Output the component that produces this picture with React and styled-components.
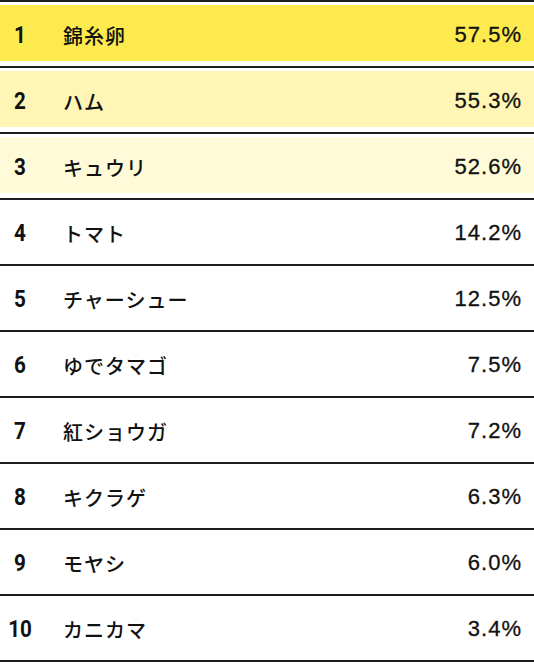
import React from "react"
import styled, { createGlobalStyle } from "styled-components"

const GlobalStyle = createGlobalStyle`
  html, body {
    margin: 0;
    padding: 0;
    background: #fff;
  }
  body {
    font-family: "Noto Sans CJK JP", "Liberation Sans", sans-serif;
    color: #111;
  }
`

const List = styled.ol`
  list-style: none;
  margin: 0;
  padding: 0;
  width: 534px;
  border-bottom: 2px solid #1e1e1e;
`

const Row = styled.li`
  border-top: 2px solid #1e1e1e;
  padding: 3px 0 5px 0;
`

const Cell = styled.div`
  display: grid;
  grid-template-columns: 40px 1fr auto;
  align-items: center;
  height: 56px;
  padding-right: 12px;
  background: ${(p) => p.$bg};
`

const Rank = styled.span`
  display: inline-block;
  font-family: Roboto, "Liberation Sans", sans-serif;
  font-weight: 700;
  font-size: 24px;
  text-align: center;
  padding-top: 3px;
  transform: scaleX(0.86);
`

const Name = styled.span`
  font-family: "Noto Sans CJK JP", sans-serif;
  font-weight: 500;
  font-size: 20px;
  padding-left: 23px;
  padding-top: 4px;
  letter-spacing: 1px;
`

const Percent = styled.span`
  font-family: "Liberation Sans", Arial, sans-serif;
  font-size: 22px;
  letter-spacing: 1px;
  padding-top: 3px;
  -webkit-text-stroke: 0.3px #111;
`

const items = [
  ["錦糸卵", "57.5%"],
  ["ハム", "55.3%"],
  ["キュウリ", "52.6%"],
  ["トマト", "14.2%"],
  ["チャーシュー", "12.5%"],
  ["ゆでタマゴ", "7.5%"],
  ["紅ショウガ", "7.2%"],
  ["キクラゲ", "6.3%"],
  ["モヤシ", "6.0%"],
  ["カニカマ", "3.4%"],
]

const backgrounds = ["#fdea4f", "#fff5b5", "#fffad8"]

export default function App() {
  return (
    <>
      <GlobalStyle />
      <List>
        {items.map(([name, pct], i) => (
          <Row key={name}>
            <Cell $bg={backgrounds[i] || "#fff"}>
              <Rank>{i + 1}</Rank>
              <Name>{name}</Name>
              <Percent>{pct}</Percent>
            </Cell>
          </Row>
        ))}
      </List>
    </>
  )
}
